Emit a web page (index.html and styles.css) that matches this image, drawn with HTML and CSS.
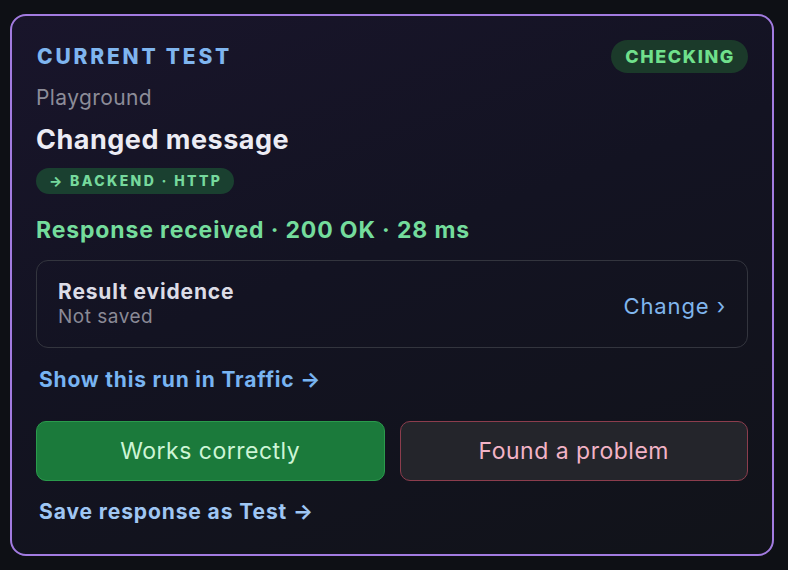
FILE: index.html
```html
<!DOCTYPE html>
<html lang="en">
<head>
    <meta charset="UTF-8">
    <meta name="viewport" content="width=device-width, initial-scale=1.0">
    <title>Current test</title>
    <link rel="stylesheet" href="styles.css">
</head>
<body>
    <div class="card">
        <div class="cardHeader">
            <span class="eyebrow">CURRENT TEST</span>
            <span class="statusPill">CHECKING</span>
        </div>
        <p class="project">Playground</p>
        <h2 class="testName">Changed message</h2>
        <span class="routeBadge">&#8594; BACKEND · HTTP</span>

        <p class="response">Response received · 200 OK · 28 ms</p>

        <div class="evidence">
            <div>
                <p class="evidenceTitle">Result evidence</p>
                <p class="evidenceState">Not saved</p>
            </div>
            <a class="changeLink">Change ›</a>
        </div>

        <a class="link trafficLink">Show this run in Traffic &#8594;</a>

        <div class="verdict">
            <button class="btn btnOk">Works correctly</button>
            <button class="btn btnBad">Found a problem</button>
        </div>

        <a class="link saveLink">Save response as Test &#8594;</a>
    </div>
</body>
</html>
```

FILE: styles.css
```css
* {
    margin: 0;
    padding: 0;
    box-sizing: border-box;
}
body {
    font-family: Inter, "Noto Sans", sans-serif;
    background-color: #0e1015;
    padding: 14px 14px 0 10px;
}
.card {
    width: 764px;
    height: 542px;
    border: 2px solid #a27be0;
    border-radius: 16px;
    background: linear-gradient(160deg, #19152b 0%, #131322 45%, #111319 100%);
    padding: 24px 24px 0 24px;
    display: flex;
    flex-direction: column;
    align-items: flex-start;
}
.cardHeader {
    width: 100%;
    height: 33px;
    display: flex;
    justify-content: space-between;
    align-items: center;
}
.eyebrow {
    color: #7fb5ef;
    font-weight: 800;
    font-size: 21px;
    line-height: 24px;
    letter-spacing: 2.8px;
    margin-left: 1px;
}
.statusPill {
    background-color: #1b3a2a;
    color: #70e08c;
    font-weight: 800;
    font-size: 18px;
    line-height: 33px;
    letter-spacing: 1.6px;
    padding: 0 13px 0 14px;
    border-radius: 100px;
}
.project {
    color: #8c8c98;
    font-size: 21px;
    line-height: 24px;
    letter-spacing: 0.4px;
    margin-top: 13px;
}
.testName {
    color: #ececf4;
    font-size: 27px;
    line-height: 32px;
    font-weight: 700;
    letter-spacing: 0.5px;
    margin-top: 14px;
}
.routeBadge {
    background-color: #1a4030;
    color: #76d99d;
    font-weight: 800;
    font-size: 14px;
    line-height: 26px;
    letter-spacing: 2.35px;
    padding: 0 12px 0 13px;
    border-radius: 100px;
    margin-top: 12px;
}
.response {
    color: #74dc9c;
    font-weight: 700;
    font-size: 23px;
    line-height: 28px;
    letter-spacing: 0.85px;
    margin-top: 22px;
}
.evidence {
    width: 100%;
    height: 88px;
    margin-top: 16px;
    border: 1.5px solid #33353e;
    border-radius: 12px;
    padding: 0 21px;
    display: flex;
    justify-content: space-between;
    align-items: center;
}
.evidenceTitle {
    color: #dcdce6;
    font-weight: 700;
    font-size: 21px;
    line-height: 24px;
    letter-spacing: 0.85px;
}
.evidenceState {
    color: #8a8a96;
    font-size: 19px;
    line-height: 22px;
    letter-spacing: 0.5px;
    margin-top: 2px;
}
.changeLink {
    color: #80b6ee;
    font-size: 22px;
    line-height: 26px;
    letter-spacing: 0.9px;
    margin-top: 3px;
}
.link {
    font-weight: 700;
    font-size: 21px;
    line-height: 26px;
    margin-left: 3px;
}
.trafficLink {
    color: #78b4f2;
    letter-spacing: 0.8px;
    margin-top: 19px;
}
.saveLink {
    color: #9fc6f3;
    letter-spacing: 0.9px;
    margin-top: 18px;
}
.verdict {
    width: 100%;
    display: grid;
    grid-template-columns: 1fr 1fr;
    gap: 15px;
    margin-top: 28px;
}
.btn {
    height: 60px;
    border-radius: 10px;
    font-family: Inter, "Noto Sans", sans-serif;
    font-size: 23px;
    letter-spacing: 0.5px;
    cursor: pointer;
}
.btnOk {
    background-color: #1b7a3b;
    border: 1.5px solid #2a9b4c;
    color: #cdf5d6;
}
.btnBad {
    background-color: #24252b;
    border: 1.5px solid #8c3d4d;
    color: #f2b3c6;
}
```
